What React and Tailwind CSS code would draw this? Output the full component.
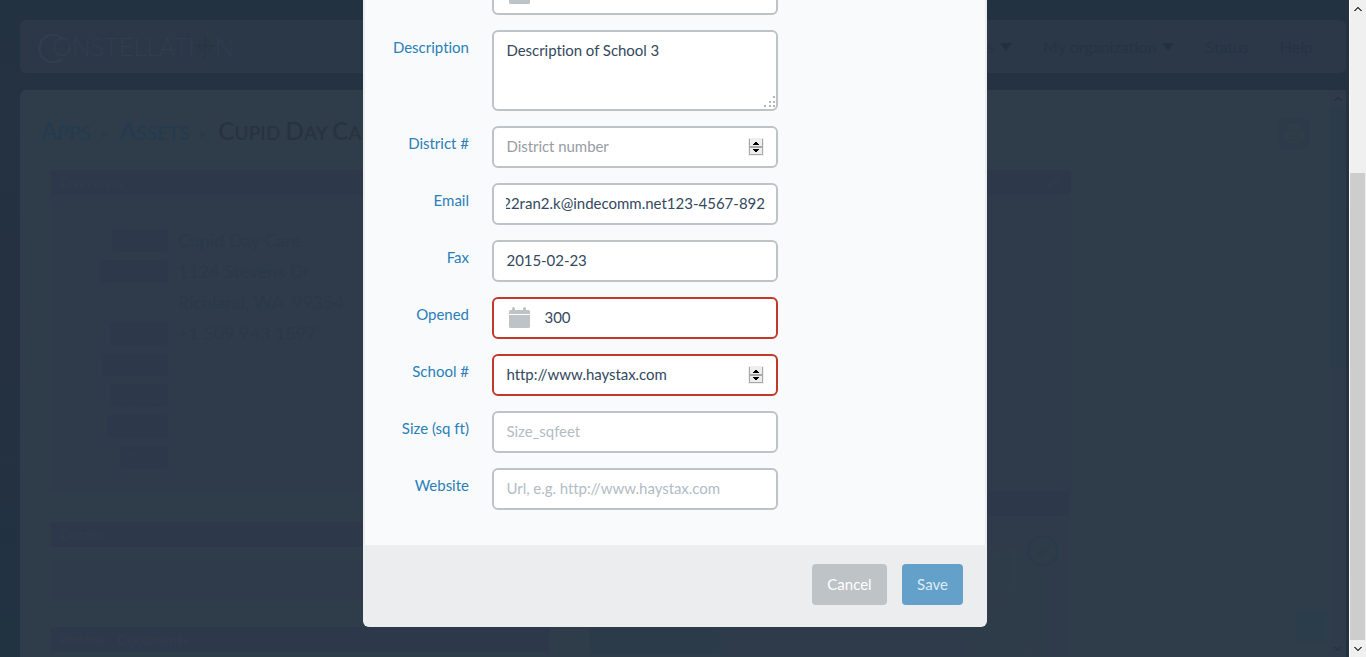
import React from "react";

const details = [
  ["Name", "w-14", "Cupid Day Care"],
  ["Address", "w-[68px]", "1124 Stevens Dr"],
  ["", "", "Richland, WA\u00a0 99354"],
  ["Phone", "w-[58px]", "+1 509 943 1597"],
  ["District", "w-[65px]", ""],
  ["Group", "w-[57px]", ""],
  ["Owner", "w-[61px]", ""],
  ["Type", "w-12", ""],
];

function Chevron({ down, className }) {
  return (
    <svg viewBox="0 0 8 6" className={className} shapeRendering="crispEdges" fill="none" stroke="currentColor" strokeWidth="2">
      <path d={down ? "M.7 1.2 4 4.5 7.3 1.2" : "M.7 4.8 4 1.5 7.3 4.8"} />
    </svg>
  );
}

function Crumb({ first, rest }) {
  return (
    <span>
      {first}
      <span className="text-[19px]">{rest}</span>
    </span>
  );
}

function CrumbArrow() {
  return <span className="mt-1 mr-[11px] ml-[11px] h-0 w-0 border-y-[4px] border-l-[7px] border-y-transparent border-l-[#2c3a47]" />;
}

function Compass() {
  return (
    <svg viewBox="0 0 22 26" className="h-[26px] w-[22px]" fill="none" stroke="#26343f">
      <circle cx="11" cy="12" r="9" stroke="#2c3b45" strokeDasharray="3 1" />
      <circle cx="11" cy="12" r="6" strokeDasharray="2 2" />
      <path d="M1 12h20M11 3v22" />
      <path d="M5 6l12 12M17 6 5 18" strokeDasharray="2 1" />
    </svg>
  );
}

function Backdrop() {
  return (
    <div className="flex h-[657px] w-[1349px] flex-col bg-linear-to-b from-[#233241] via-[#253141] to-[#213241] pt-5 pr-[3px] pl-5">
      <header className="flex h-[53px] shrink-0 items-center justify-between rounded-md bg-linear-to-r from-[#2c3848] via-[#293847] to-[#2c3848] pr-[33px] pl-4">
        <div className="flex items-center text-[#303e4e]">
          <span className="w-4 text-[42px] leading-none font-light">C</span>
          <span className="text-[25px] font-light tracking-[0.1px]">ONSTELLATI</span>
          <span className="-mx-px"><Compass /></span>
          <span className="text-[25px] font-light">N</span>
        </div>
        <nav className="flex text-base text-[#253443]">
          <span className="mr-[31px] flex items-center gap-1.5">Apps<span className="h-0 w-0 border-x-[6px] border-t-[8px] border-x-transparent border-t-[#223140]" /></span>
          <span className="mr-[31px] flex items-center gap-1.5">My organization<span className="h-0 w-0 border-x-[6px] border-t-[8px] border-x-transparent border-t-[#223140]" /></span>
          <span className="mr-[31px]">Status</span>
          <span>Help</span>
        </nav>
      </header>
      <main className="mt-[17px] flex min-h-0 flex-1 rounded-tl-md bg-[#2f3c49]">
        <div className="flex min-w-0 flex-1 flex-col pl-[30px]">
          <div className="flex h-20 shrink-0 items-start justify-between pt-[28px] pr-[21px]">
            <div className="-ml-[9px] flex items-center text-2xl leading-[26px] font-medium text-[#243b50]">
              <Crumb first="A" rest="PPS" />
              <CrumbArrow />
              <Crumb first="A" rest="SSETS" />
              <CrumbArrow />
              <span className="tracking-[0.2px] text-[#263340]">
                <Crumb first="C" rest="UPID " /><Crumb first="D" rest="AY " /><Crumb first="C" rest="ARE" />
              </span>
            </div>
            <div className="mt-px flex h-[30px] w-[30px] items-center justify-center rounded bg-[#2d3a4a]">
              <svg viewBox="0 0 24 24" className="h-6 w-6" fill="#2f3d49"><path d="M6 2h12v6H6zM2 9h20v9h-4v-4H6v4H2zM7 15h10v2H7zM7 18h10v3H7z" /></svg>
            </div>
          </div>
          <div className="flex w-[1021px] items-center justify-between rounded bg-[#2d394a] px-2.5 text-sm leading-[25px] font-bold tracking-wide text-[#2f3c4a]">
            Overview
            <svg viewBox="0 0 16 16" className="h-4 w-4" fill="#2e3b49"><path d="m2 14 1-4 8-8 3 3-8 8z" /></svg>
          </div>
          <div className="flex h-[298px] w-[1021px] shrink-0 flex-col bg-[#2f3b4a] pt-[34px]">
            {details.map(([label, width, value], i) => (
              <div key={i} className="flex h-[31px] shrink-0">
                <div className="flex w-[118px] justify-end">
                  {label && <span className={`${width} h-[23px] rounded bg-[#2d394a] pr-2.5 text-right text-sm leading-[25px] text-[#2e3b4a]`}>{label}</span>}
                </div>
                <span className="pl-2.5 text-lg leading-[22px] tracking-[-0.05px] text-[#293948]">{value}</span>
              </div>
            ))}
          </div>
          <div className="flex min-h-0 flex-1 justify-between pr-[260px]">
            <div className="w-[500px]">
              <h2 className="mt-[29px] rounded bg-[#2d394a] pl-2.5 text-sm leading-[25px] font-bold text-[#2f3c4a]">Details</h2>
              <div className="mt-3 h-10 bg-[#2f3b4a]" />
              <h2 className="mt-7 rounded bg-[#2d394a] pl-2.5 text-sm leading-[25px] font-bold text-[#2f3c4a]">Photos / Documents</h2>
            </div>
            <div className="w-[481px]">
              <div className="mt-[-2px] h-[25px] rounded bg-[#2d394a]" />
              <div className="flex h-[139px] justify-end bg-linear-to-r from-[#2b3b49] from-25% to-[#2f3b4a] to-30% pt-[19px] pr-2.5">
                <svg viewBox="0 0 96 120" className="h-[120px] w-24">
                  <path d="M0 12H84V120H0z" fill="#2e3b48" />
                  <path d="M0 21 50 16V56L0 66M20 85 75 120" fill="none" stroke="#303e49" strokeWidth="1.5" />
                  <circle cx="79" cy="16" r="14.500" fill="#2e3b49" stroke="#293b4a" strokeWidth="2" />
                  <path d="m72 22 2-5 10-8 3 3-9 9z" fill="#2b3b48" />
                </svg>
              </div>
            </div>
          </div>
        </div>
        <div className="flex w-4 flex-col items-center bg-[#2f3b4a] text-[#24333f]">
          <Chevron className="mt-[6px] h-[6px] w-2" />
          <div className="mt-[5px] h-[261px] w-4 bg-[#2b3b49]" />
          <div className="mt-auto mr-[54px] mb-3 flex h-[30px] w-[30px] shrink-0 items-center justify-center rounded bg-[#2b3c4a]">
            <svg viewBox="0 0 24 24" className="h-6 w-6" fill="#2d3c49"><path d="m3 18 5-10 3 4 5-8 6 14z" /></svg>
          </div>
          <Chevron down className="-mt-2 mb-[5px] h-[6px] w-2 shrink-0" />
        </div>
      </main>
    </div>
  );
}

function Spinner() {
  return (
    <span className="flex h-[18px] w-4 items-center justify-center bg-[#efefef]">
      <svg viewBox="0 0 14 16" className="h-4 w-3.5" shapeRendering="crispEdges">
        <path d="M0 0h14v16H0z" fill="#a8a8a8" />
        <path d="M1 0h12v7H1zM1 9h12v6H1z" fill="#eee" />
        <path d="M6 3h2v1h1v1H5V4h1zM4 5h6v1H4zM4 10h6v1H4zM5 11h4v1H5zM6 12h2v1H6z" fill="#000" />
      </svg>
    </span>
  );
}

function Calendar() {
  return (
    <svg viewBox="0 0 21 21" className="mr-[14.5px] ml-[2.5px] h-[21px] w-[21px] shrink-0" fill="#bdc3c7">
      <path d="M0 7V4.5Q0 3 1.5 3H3V1.5Q3 0 4.5 0T6 1.5V3h8V1.5Q14 0 15.5 0T17 1.5V3h2.500Q21 3 21 4.500V7zM0 8h21v11.500Q21 21 19.500 21h-18Q0 21 0 19.500z" />
    </svg>
  );
}

function Field({ label, value, placeholder, muted, invalid, spinner, calendar, end, area }) {
  const border = invalid ? "border-[#c0392b]" : "border-[#bdc3c7]";
  const color = value ? "text-[#34495e]" : muted ? "text-[#979da3]" : "text-[#b2bcc5]";
  return (
    <div className="flex">
      <label className="w-[104px] pt-[7px] text-right text-[15px] leading-[21px] text-[#2980b9]">{label}</label>
      <div className={`relative ml-[23px] flex w-[286px] items-start rounded-md border-2 bg-white pt-2 pr-3 pl-[12.5px] text-[15px] leading-[21px] ${border} ${color} ${area ? "h-[81px]" : "h-[42px]"}`}>
        {calendar && <Calendar />}
        <span className={end ? "-mr-px -ml-[0.5px] flex w-[260px] justify-end overflow-hidden whitespace-nowrap" : "flex-1 tracking-[-0.05px] whitespace-nowrap"}>{value || placeholder}</span>
        {spinner && <span className="mt-0.5"><Spinner /></span>}
        {area && (
          <svg viewBox="0 0 12 12" className="absolute right-0 bottom-px h-3 w-3" fill="#b5b5b5" shapeRendering="crispEdges">
            <path d="M9 0h2v2H9zM5 5h2v2H5zM9 5h2v2H9zM0 9h2v2H0zM5 9h2v2H5zM9 9h2v2H9z" />
          </svg>
        )}
      </div>
    </div>
  );
}

function Modal() {
  return (
    <section className="absolute top-0 left-[363px] flex h-[627px] w-[624px] flex-col overflow-hidden rounded-b-md bg-[#ebedee] [font-variant-ligatures:none]">
      <div className="mx-0.5 flex h-[545px] flex-col gap-[15px] bg-[#f9fafc]">
        <div className="flex h-[15px] shrink-0 items-end overflow-hidden">
          <Field label="" value=" " calendar />
        </div>
        <Field label="Description" value="Description of School 3" area />
        <Field label="District #" placeholder="District number" muted spinner />
        <Field label="Email" value="22ran2.k@indecomm.net123-4567-892" end />
        <Field label="Fax" value="2015-02-23" />
        <Field label="Opened" value="300" calendar invalid />
        <Field label="School #" value="http://www.haystax.com" invalid spinner />
        <Field label="Size (sq ft)" placeholder="Size_sqfeet" />
        <Field label="Website" placeholder="Url, e.g. http://www.haystax.com" />
      </div>
      <footer className="flex justify-end gap-[15px] pt-[19px] pr-6 text-[15px]">
        <button className="h-[41px] w-[75px] rounded bg-[#bdc3c7] text-white">Cancel</button>
        <button className="h-[41px] w-[61px] rounded bg-[#64a1ca] text-[#dfebf4]">Save</button>
      </footer>
    </section>
  );
}

export default function App() {
  return (
    <div className="relative flex h-[657px] w-[1366px] overflow-hidden bg-[#f0f0f0] font-['Lato',sans-serif]">
      <Backdrop />
      <Modal />
      <aside className="flex w-[17px] flex-col items-center border-l border-white bg-[#f0f0f0] text-[#505050]">
        <Chevron className="mt-1.5 h-[6px] w-2" />
        <div className="mt-[161px] h-[467px] w-[15px] shrink-0 self-start bg-[#cdcdcd]" />
        <Chevron down className="mt-1.5 h-[6px] w-2" />
      </aside>
    </div>
  );
}
